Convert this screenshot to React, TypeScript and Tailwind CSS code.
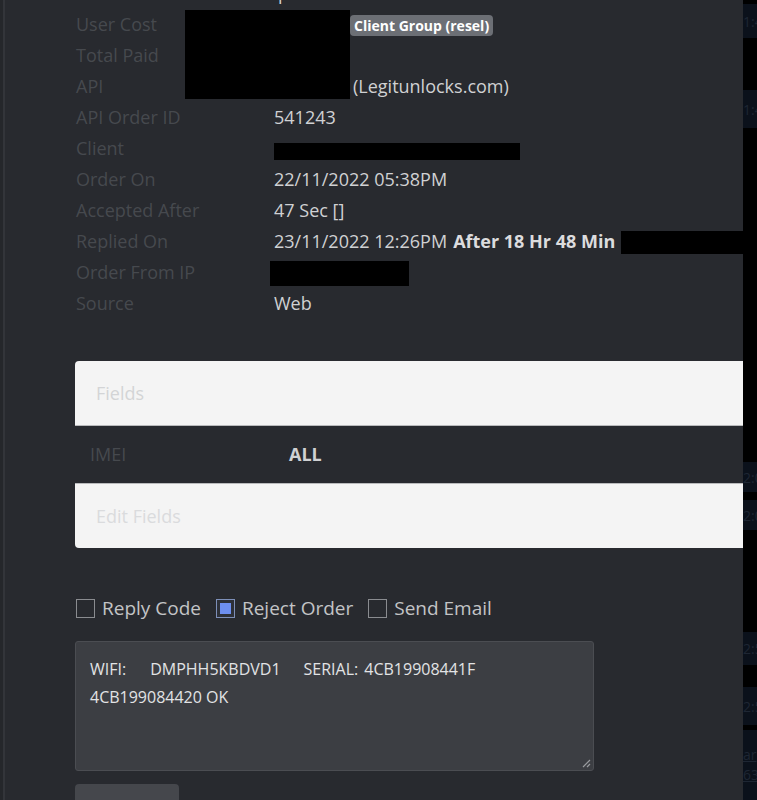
import { ReactNode } from 'react';

const FONT = { fontFamily: '"Open Sans", "Segoe UI", Arial, sans-serif' };

// ─── Detail row ─────────────────────────────────────────────────────────────

function Row({ label, children }: { label: string; children?: ReactNode }) {
  return (
    <div className="h-[31px] shrink-0 flex items-center">
      <div className="w-[198px] shrink-0 text-[18px] text-[#46494e] whitespace-nowrap">{label}</div>
      <div className="flex-1 flex items-center text-[18px] text-[#d0d1d3] whitespace-nowrap min-w-0">{children}</div>
    </div>
  );
}

function Redacted({ className }: { className: string }) {
  return <span className={`inline-block bg-black shrink-0 ${className}`} />;
}

function Checkbox({ label, checked }: { label: string; checked?: boolean }) {
  return (
    <label className="flex items-center gap-[7px]">
      <span
        className={`w-[19px] h-[19px] flex items-center justify-center border ${
          checked ? 'border-[#7d8fb8] bg-[#2d3038]' : 'border-[#8a8c90]'
        }`}
      >
        {checked && <span className="w-[11px] h-[11px] bg-[#6d8ff0]" />}
      </span>
      <span className="text-[19px] text-[#c3c4c6]">{label}</span>
    </label>
  );
}

// Dark rows of the list peeking in on the right
function SideStrip() {
  const blocks = [
    { top: 'mt-[4px] h-[34px]', text: '1:4' },
    { top: 'mt-[52px] h-[38px]', text: '1:4' },
    { top: 'mt-[334px] h-[30px]', text: '2:0' },
    { top: 'mt-[8px] h-[30px]', text: '2:0' },
    { top: 'mt-[102px] h-[33px]', text: '2:5' },
    { top: 'mt-[22px] h-[38px]', text: '2:5' },
  ];
  return (
    <div className="w-[14px] shrink-0 bg-black flex flex-col overflow-hidden">
      {blocks.map((b, i) => (
        <div key={i} className={`${b.top} shrink-0 bg-[#0b111b] flex items-center text-[14px] text-[#1e2633] whitespace-nowrap`}>
          {b.text}
        </div>
      ))}
      <div className="mt-[5px] h-[70px] shrink-0 bg-[#0b111b] flex flex-col justify-center text-[14px] leading-[20px] text-[#1e2633] underline">
        <span>ar</span>
        <span>63</span>
      </div>
    </div>
  );
}

export default function App() {
  return (
    <div className="w-[757px] h-[800px] flex overflow-hidden bg-black" style={FONT}>
      {/* ── Order panel ─────────────────────────────────────────────────── */}
      <div className="w-[743px] shrink-0 bg-[#282a2f] flex">
        <div className="w-[3px] shrink-0 bg-[#25272b]" />
        <div className="w-[2px] shrink-0 bg-[#33353a]" />
        <div className="flex-1 flex flex-col pl-[71px] min-w-0">
          {/* Order details */}
          <div className="relative -mt-[22px] shrink-0">
            <Row label="">
              <span className="ml-[4px]">p</span>
            </Row>
            <Row label="User Cost">
              <span className="ml-[76px] px-[4px] h-[21px] leading-[21px] mt-[1px] rounded-[4px] bg-[#6c6f75] text-[14px] font-bold text-white">
                Client Group (resel)
              </span>
            </Row>
            <Row label="Total Paid" />
            <Row label="API">
              <span className="ml-[79px]">(Legitunlocks.com)</span>
            </Row>
            <Row label="API Order ID">541243</Row>
            <Row label="Client">
              <Redacted className="w-[246px] h-[17px] mt-[5px]" />
            </Row>
            <Row label="Order On">22/11/2022 05:38PM</Row>
            <Row label="Accepted After">47 Sec []</Row>
            <Row label="Replied On">
              <span>23/11/2022 12:26PM</span>
              <span className="ml-[6px] font-bold text-[#dcdcde]">After 18 Hr 48 Min</span>
              <Redacted className="ml-[6px] flex-1 h-[23px] mt-[1px]" />
            </Row>
            <Row label="Order From IP">
              <Redacted className="-ml-[4px] w-[139px] h-[25px] mt-[2px]" />
            </Row>
            <Row label="Source">Web</Row>

            {/* redaction over the cost / API values */}
            <div className="absolute left-[109px] top-[32px] w-[165px] h-[89px] bg-black" />
          </div>

          {/* Fields table */}
          <div className="mt-[42px] -ml-[1px] shrink-0 rounded-l-[4px] overflow-hidden flex flex-col">
            <div className="h-[65px] shrink-0 bg-[#f4f4f4] border-b border-[#b9babc] flex items-center pl-[21px] text-[18px] text-[#d3d4d6]">
              Fields
            </div>
            <div className="h-[57px] shrink-0 bg-[#282a2f] flex items-center pl-[15px]">
              <span className="w-[199px] text-[18px] text-[#46494e]">IMEI</span>
              <span className="text-[18px] font-bold text-[#d0d1d3]">ALL</span>
            </div>
            <div className="h-[65px] shrink-0 bg-[#f4f4f4] border-t border-[#b9babc] flex items-center pl-[21px] text-[18px] text-[#dadbdd]">
              Edit Fields
            </div>
          </div>

          {/* Reply options */}
          <div className="mt-[49px] h-[22px] shrink-0 flex items-center gap-[15px]">
            <Checkbox label="Reply Code" />
            <Checkbox label="Reject Order" checked />
            <Checkbox label="Send Email" />
          </div>

          <div className="mt-[22px] -ml-[1px] shrink-0 w-[519px] h-[130px] rounded-[3px] bg-[#3c3e43] border border-[#4b4d52] relative">
            <div className="pt-[13px] pl-[14px] text-[16px] leading-[28px] text-[#e2e3e5]">
              <div className="flex whitespace-nowrap">
                <span>WIFI:</span>
                <span className="ml-[24px]">DMPHH5KBDVD1</span>
                <span className="ml-[23px]">SERIAL:</span>
                <span className="ml-[6px]">4CB19908441F</span>
              </div>
              <div>4CB199084420 OK</div>
            </div>
            {/* resize grip */}
            <svg className="absolute right-[2px] bottom-[2px] w-[10px] h-[10px]" viewBox="0 0 10 10">
              <path d="M9 2L2 9M9 6L6 9" stroke="#9a9ca0" strokeWidth="1.2" />
            </svg>
          </div>

          <div className="mt-[13px] -ml-[1px] shrink-0 w-[104px] h-[32px] rounded-[4px] bg-[#45474c]" />
        </div>
      </div>

      <SideStrip />
    </div>
  );
}
